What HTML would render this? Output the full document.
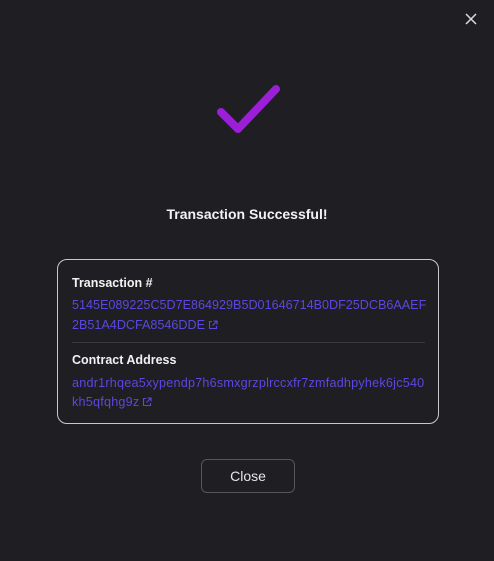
<!DOCTYPE html>
<html><head><style>
body{margin:0;width:494px;height:561px;background:#1f1e23;font-family:"Liberation Sans",sans-serif;position:relative;overflow:hidden}
.a{position:absolute}
.t{color:#f2f2f2;font-weight:bold}
.l{color:#5b48e0;font-size:12.6px;white-space:nowrap}
.i{display:inline-block;vertical-align:-1px;margin-left:3px}
</style></head><body>
<svg class="a" style="left:463px;top:11px" width="16" height="16" viewBox="0 0 16 16"><path d="M3 3L13 13M13 3L3 13" stroke="#ddd" stroke-width="1.5"/></svg>
<svg class="a" style="left:0;top:0" width="494" height="200"><path d="M221 112L238 129L276 89" fill="none" stroke="#9b1fd6" stroke-width="8" stroke-linecap="round" stroke-linejoin="round"/></svg>
<div class="a t" style="left:0;width:494px;top:206px;text-align:center;font-size:14px">Transaction Successful!</div>
<div class="a" style="left:57px;top:259px;width:380px;height:163px;border:1px solid #c8c8c8;border-radius:10px"></div>
<div class="a t" style="left:72px;top:276px;font-size:12.5px">Transaction #</div>
<div class="a l" style="left:72px;top:298px;letter-spacing:0px">5145E089225C5D7E864929B5D01646714B0DF25DCB6AAEF</div>
<div class="a l" style="left:72px;top:318px;letter-spacing:0px">2B51A4DCFA8546DDE<svg class="i" width="10" height="10" viewBox="0 0 10 10"><path d="M4 1.5H1.5V8.5H8.5V6M5.5 1H9V4.5M9 1L4.5 5.5" fill="none" stroke="#5b48e0" stroke-width="1.1"/></svg></div>
<div class="a" style="left:72px;top:342px;width:353px;height:1px;background:#3a393e"></div>
<div class="a t" style="left:72px;top:353px;font-size:12.5px">Contract Address</div>
<div class="a l" style="left:72px;top:376px;letter-spacing:0.23px">andr1rhqea5xypendp7h6smxgrzplrccxfr7zmfadhpyhek6jc540</div>
<div class="a l" style="left:72px;top:395px;letter-spacing:0.23px">kh5qfqhg9z<svg class="i" width="10" height="10" viewBox="0 0 10 10"><path d="M4 1.5H1.5V8.5H8.5V6M5.5 1H9V4.5M9 1L4.5 5.5" fill="none" stroke="#5b48e0" stroke-width="1.1"/></svg></div>
<div class="a" style="left:201px;top:459px;width:92px;height:32px;border:1px solid #56555b;border-radius:6px;color:#e6e6e6;font-size:14px;text-align:center;line-height:32px">Close</div>
</body></html>
